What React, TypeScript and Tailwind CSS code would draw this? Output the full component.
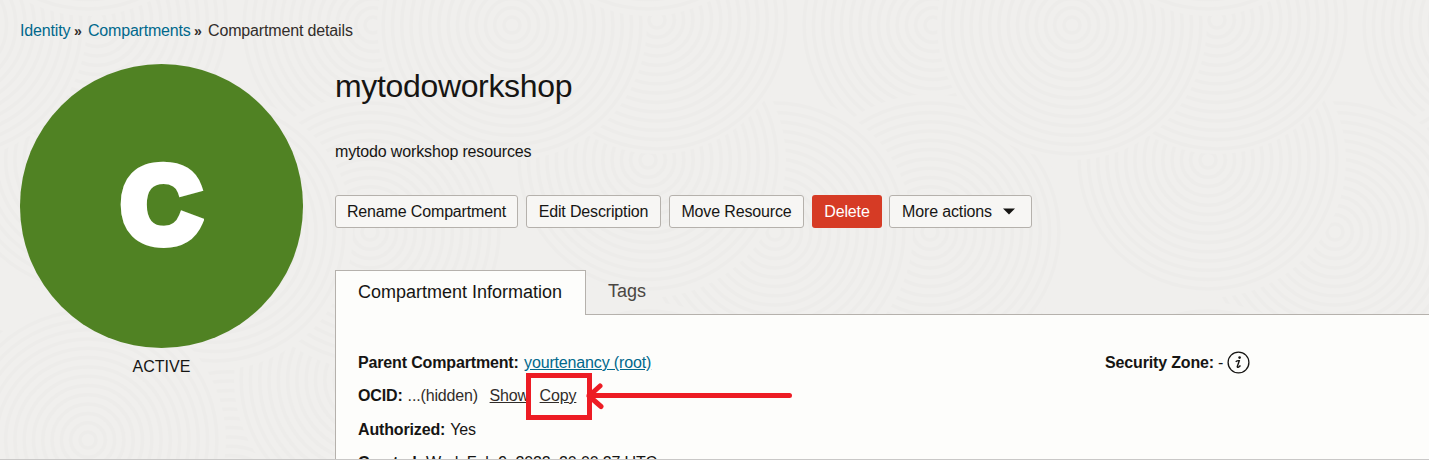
import React from "react";

type Disc = [number, number, number];

// Overlapping ripples, listed from back to front; the texture repeats every 560px.
const DISCS: Disc[] = [
  [230, 510, 180],
  [510, 500, 180],
  [370, 380, 136],
  [373, 25, 138],
  [370, 232, 138],
  [215, 232, 138],
  [88, 440, 138],
  [88, 160, 138],
  [97, 20, 134],
  [512, 25, 135],
  [88, -120, 136],
];
const RADII = Array.from({ length: 19 }, (_, i) => 8 + i * 9.3);

function Texture() {
  return (
    <svg className="absolute inset-0 -z-10" width="1429" height="460" aria-hidden="true">
      <rect width="1429" height="460" fill="#f0efed" />
      {DISCS.flatMap(([x, y, r], k) =>
        [-560, 0, 560, 1120].map((dx) => (
          <g key={`${k}-${dx}`}>
            <circle cx={x + dx} cy={y} r={r} fill="#f0efed" />
            {RADII.filter((q) => q < r).map((q) => (
              <circle key={q} cx={x + dx} cy={y} r={q} fill="none" stroke="#edecea" strokeWidth="3.500" />
            ))}
          </g>
        )),
      )}
    </svg>
  );
}

function Button({ children, className }: { children: React.ReactNode; className: string }) {
  return (
    <button
      className={`flex h-[33px] shrink-0 items-center justify-center rounded-[3px] border border-[#b5b1ac] bg-[#f7f6f4] tracking-[-0.15px] ${className}`}
    >
      {children}
    </button>
  );
}

export default function App() {
  return (
    <div className="relative isolate h-[460px] w-[1429px] overflow-hidden whitespace-nowrap font-['Liberation_Sans',Arial,sans-serif] text-[16px] leading-5 tracking-[-0.15px] text-[#161513]">
      <Texture />
      <nav className="flex h-[64px] pt-[21px] pl-5">
        <a className="w-[54px] text-[#00688c]">Identity</a>
        <span className="w-[14px] text-[14px] font-bold text-[#312d2a]">»</span>
        <a className="w-[106px] tracking-[-0.2px] text-[#00688c]">Compartments</a>
        <span className="w-[14px] text-[14px] font-bold text-[#312d2a]">»</span>
        <span className="text-[#312d2a]">Compartment details</span>
      </nav>
      <div className="flex pl-5">
        <aside className="w-[315px] shrink-0">
          <div className="flex h-[284px] w-[283px] items-center justify-center rounded-full bg-[#508223] pr-[1px] pb-[3px]">
            <span className="scale-x-[1.02] text-[108px] leading-none font-bold tracking-normal text-white [-webkit-text-stroke:10px_white]">
              C
            </span>
          </div>
          <div className="w-[283px] pt-[9px] text-center tracking-normal">ACTIVE</div>
        </aside>
        <main className="w-[1094px] shrink-0">
          <h1 className="pt-[4px] text-[32px] leading-9 tracking-[-0.34px]">mytodoworkshop</h1>
          <p className="pt-[38px]">mytodo workshop resources</p>
          <div className="flex pt-[33px]">
            <Button className="mr-2 w-[183px]">Rename Compartment</Button>
            <Button className="mr-2 w-[135px]">Edit Description</Button>
            <Button className="mr-2 w-[135px]">Move Resource</Button>
            <button className="mr-[7px] h-[33px] w-[70px] rounded-[3px] bg-[#d63b25] tracking-[-0.15px] text-white">
              Delete
            </button>
            <Button className="w-[143px] pr-[4px]">
              More actions
              <svg className="ml-[11px]" width="12" height="7" viewBox="0 0 12 7">
                <path d="M0 .5h12L6 6.500z" fill="#161513" />
              </svg>
            </Button>
          </div>
          <div className="mt-[42px] flex h-[45px] text-[18px] tracking-normal">
            <div className="z-10 w-[251px] border border-b-0 border-[#b5b1ac] bg-[#fdfdfb] pt-[11px] pl-[22px]">
              Compartment Information
            </div>
            <div className="flex-1 border-b border-[#b5b1ac] pt-[11px] pl-[22px] text-[#4a4642]">Tags</div>
          </div>
          <section className="flex h-[145px] border-l border-[#b5b1ac] bg-[#fdfdfb] pl-[22px]">
            <div className="w-[747px] pt-[38px]">
              <div className="h-[33px]">
                <b className="mr-px">Parent Compartment:</b>{" "}
                <a className="text-[#00688c] underline">yourtenancy (root)</a>
              </div>
              <div className="flex h-[34px] text-[#312d2a]">
                <b className="mr-[5px] text-[#161513]">OCID:</b>
                <span className="w-[82px]">...(hidden)</span>
                <a className="w-[50px] underline">Show</a>
                <div className="relative">
                  <a className="underline">Copy</a>
                  <div className="absolute -top-[13px] -left-[14px] h-[47px] w-[66px] border-[5px] border-[#ed1c24]" />
                  <svg
                    className="absolute -top-[4px] left-[45px]"
                    width="210"
                    height="30"
                    fill="none"
                    stroke="#ed1c24"
                    strokeWidth="5"
                    strokeLinecap="round"
                    strokeLinejoin="round"
                  >
                    <path d="M204.500 13.500H4M15 4L4 14L16 24.500" />
                  </svg>
                </div>
              </div>
              <div className="h-[33px]">
                <b className="mr-px">Authorized:</b> Yes
              </div>
              <div>
                <b>Created:</b> Wed, Feb 9, 2022, 20:00:27 UTC
              </div>
            </div>
            <div className="flex h-fit items-center pt-[36px]">
              <b>Security Zone:</b>
              <span className="ml-[4px]">-</span>
              <svg className="ml-[4px]" width="23" height="23" viewBox="0 0 23 23" fill="none" stroke="#161513">
                <circle cx="11.500" cy="11.500" r="10.400" strokeWidth="1.300" />
                <circle cx="12.600" cy="6.600" r="1.300" fill="#161513" stroke="none" />
                <path
                  d="M8.700 10.800C9.800 9.900 11 9.400 12.300 9.700L10.300 15.500C10 17.100 11.800 16.500 13.500 14.500"
                  strokeWidth="1.400"
                />
              </svg>
            </div>
          </section>
        </main>
      </div>
      <div className="absolute inset-x-0 bottom-0 h-px bg-[#c9c8c7]" />
    </div>
  );
}
